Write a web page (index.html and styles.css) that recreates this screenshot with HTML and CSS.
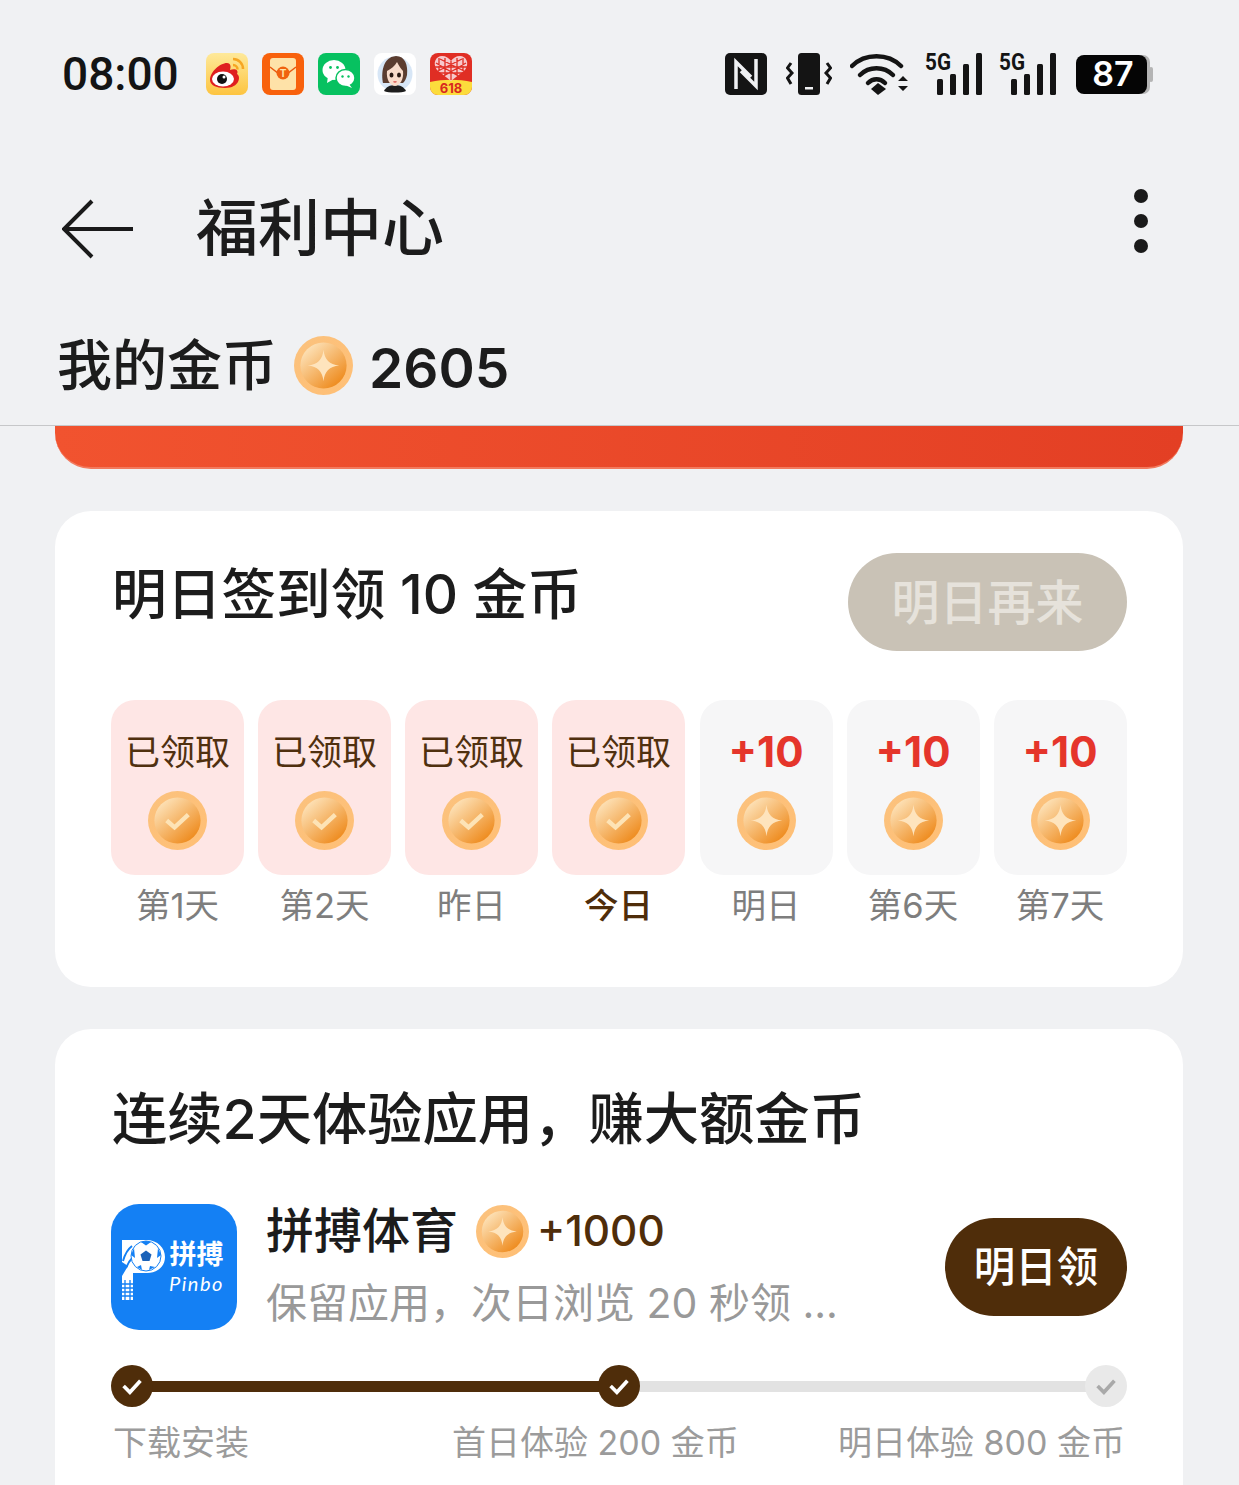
FILE: index.html
```html
<!DOCTYPE html>
<html lang="zh-CN">
<head>
  <meta charset="UTF-8" />
  <meta name="viewport" content="width=device-width, initial-scale=1" />
  <title>福利中心</title>
  <link rel="stylesheet" href="styles.css">
</head>
<body>
  <!-- shared coin art -->
  <svg class="defs" width="0" height="0">
    <defs>
      <linearGradient id="coin-rim" x1="0" y1="0" x2="1" y2="1">
        <stop offset="0" stop-color="#fbc27e" />
        <stop offset="1" stop-color="#ffbf75" />
      </linearGradient>
      <linearGradient id="coin-face" x1="0.15" y1="0.1" x2="0.85" y2="0.9">
        <stop offset="0" stop-color="#fde2b8" />
        <stop offset="1" stop-color="#ee8a1c" />
      </linearGradient>
      <symbol id="coin-star" viewBox="0 0 60 60">
        <circle cx="30" cy="30" r="30" fill="url(#coin-rim)" />
        <circle cx="30" cy="30" r="23.500" fill="url(#coin-face)" />
        <path d="M30 14 C31 24 36 29 46 30 C36 31 31 36 30 46 C29 36 24 31 14 30 C24 29 29 24 30 14Z" fill="#fee4bd" />
      </symbol>
      <symbol id="coin-check" viewBox="0 0 60 60">
        <circle cx="30" cy="30" r="30" fill="url(#coin-rim)" />
        <circle cx="30" cy="30" r="23.500" fill="url(#coin-face)" />
        <path d="M19 30 L27 37 L41 24" fill="none" stroke="#fde3b6" stroke-width="4.500" />
      </symbol>
      <symbol id="signal" viewBox="0 0 57 44">
        <text class="five-g" x="0" y="18" textLength="26" lengthAdjust="spacingAndGlyphs">5G</text>
        <rect x="12" y="27" width="6" height="16" rx="1.500" />
        <rect x="25" y="22" width="6" height="21" rx="1.500" />
        <rect x="38" y="12" width="6" height="31" rx="1.500" />
        <rect x="51" y="1" width="6" height="42" rx="1.500" />
      </symbol>
    </defs>
  </svg>

  <header class="top">
    <div class="status-bar">
      <div class="status-left">
        <span class="clock">08:00</span>
        <div class="notify-icons">
          <svg class="app-icon" viewBox="0 0 42 42">
            <defs><linearGradient id="wb" x1="0" y1="0" x2="0" y2="1"><stop offset="0" stop-color="#fee99a" /><stop offset="1" stop-color="#fdc440" /></linearGradient></defs>
            <rect width="42" height="42" rx="8" fill="url(#wb)" />
            <path d="M27 6 a10 10 0 0 1 10 10" fill="none" stroke="#f6a623" stroke-width="2.500" />
            <path d="M27 12 a4.500 4.500 0 0 1 4.500 4.500" fill="none" stroke="#f6a623" stroke-width="2.500" />
            <path d="M4 27 C4 19 14 10 21 10 C25 10 25 14 24 17 C29 15 33 17 31 21 C35 23 34 35 19 35 C10 35 4 32 4 27Z" fill="#df1f1f" />
            <ellipse cx="17" cy="26" rx="11" ry="7.500" fill="#fff" />
            <circle cx="16" cy="26" r="5" fill="#111" />
            <circle cx="18" cy="24" r="1.500" fill="#fff" />
          </svg>
          <svg class="app-icon" viewBox="0 0 42 42">
            <rect width="42" height="42" rx="8" fill="#f8610c" />
            <rect x="8" y="5" width="26" height="32" rx="3" fill="#fee2a8" />
            <path d="M8 14 L21 24 L34 14" fill="none" stroke="#e8590f" stroke-width="1.500" />
            <circle cx="21" cy="20" r="6.500" fill="#f0620f" />
            <text class="packet-t" x="21" y="23.500">T</text>
          </svg>
          <svg class="app-icon" viewBox="0 0 42 42">
            <rect width="42" height="42" rx="8" fill="#07c160" />
            <ellipse cx="16" cy="17" rx="11.500" ry="10" fill="#fff" />
            <path d="M10 23 L9 30 L16 26Z" fill="#fff" />
            <ellipse cx="27.500" cy="25" rx="9.500" ry="8.500" fill="#fff" stroke="#07c160" stroke-width="1.500" />
            <path d="M31 31 L34 35 L27 32Z" fill="#fff" />
            <circle cx="12.500" cy="14.500" r="1.400" fill="#07c160" />
            <circle cx="19.500" cy="14.500" r="1.400" fill="#07c160" />
            <circle cx="24.500" cy="23.500" r="1.200" fill="#07c160" />
            <circle cx="30.500" cy="23.500" r="1.200" fill="#07c160" />
          </svg>
          <svg class="app-icon" viewBox="0 0 42 42">
            <rect width="42" height="42" rx="8" fill="#fff" />
            <circle cx="21" cy="21" r="17.500" fill="#d7e6f6" />
            <path d="M10 38 C12 34 16 32 21 32 C26 32 30 34 32 38 C28 40 14 40 10 38Z" fill="#1d1d1d" />
            <path d="M9 30 C7 22 8 4 22 3 C31 3 34 12 33 22 C32 26 31 28 29 30Z" fill="#5b3d30" />
            <path d="M13 18 C17 16 21 13 23 9 C25 13 27 16 29 18 C30 26 26 33 21 33 C16 33 12 26 13 18Z" fill="#f9dccb" />
            <ellipse cx="17.500" cy="22" rx="2" ry="2.500" fill="#2a1a14" />
            <ellipse cx="25" cy="22" rx="2" ry="2.500" fill="#2a1a14" />
            <path d="M19.500 28.500 q1.500 1 3 0" fill="none" stroke="#d8534f" stroke-width="1.400" />
          </svg>
          <svg class="app-icon" viewBox="0 0 42 42">
            <rect width="42" height="42" rx="8" fill="#e02e24" />
            <path d="M0 29 C14 26 28 26 42 29 V34 a8 8 0 0 1 -8 8 H8 a8 8 0 0 1 -8 -8Z" fill="#fcdc3c" />
            <path d="M21 28 L7 17 C2 10 6 3 12 3 C16 3 19 5 21 8 C23 5 26 3 30 3 C36 3 40 10 35 17Z" fill="#f7c9cc" />
            <path d="M21 8 V27 M15 5 V23 M27 5 V23 M9 5 V17 M33 5 V17 M6 10 L30 24 M36 10 L12 24 M5 14 H37 M8 20 H34 M10 6 L34 18 M32 6 L8 18" stroke="#e02e24" stroke-width="1.300" fill="none" />
            <text class="pdd-text" x="21" y="40">618</text>
          </svg>
        </div>
      </div>
      <div class="status-right">
        <svg class="nfc" viewBox="0 0 42 42">
          <rect width="42" height="42" rx="5" fill="#141414" />
          <path d="M11 36 V9 L26 24 M31 6 V33 L16 18" fill="none" stroke="#f0f1f3" stroke-width="3.500" />
        </svg>
        <svg class="vibrate" viewBox="0 0 46 42">
          <rect x="12" y="0" width="22" height="42" rx="3.500" fill="#141414" />
          <rect x="19" y="34" width="8" height="2.500" fill="#f0f1f3" />
          <path d="M5 10 L1.500 15 L6 20 L1.500 25 L5 31 M41 10 L44.500 15 L40 20 L44.500 25 L41 31" fill="none" stroke="#141414" stroke-width="3" />
        </svg>
        <svg class="wifi" viewBox="0 0 58 42">
          <path d="M2 13 C15 0 38 0 51 13" fill="none" stroke="#141414" stroke-width="4.500" stroke-linecap="round" />
          <path d="M10 22 C19 13 34 13 43 22" fill="none" stroke="#141414" stroke-width="4.500" stroke-linecap="round" />
          <path d="M18 30 C23 25 30 25 35 30" fill="none" stroke="#141414" stroke-width="4.500" stroke-linecap="round" />
          <path d="M21 36 L28 30 L36 36 L28 42Z" fill="#141414" />
          <path d="M48 28 L53 23 L58 28Z M48 33 H58 L53 38Z" fill="#141414" />
        </svg>
        <svg class="signal-icon"><use href="#signal" /></svg>
        <svg class="signal-icon"><use href="#signal" /></svg>
        <svg class="battery" viewBox="0 0 77 42">
          <rect x="60" y="2" width="14" height="39" rx="7" fill="#b4b4b4" />
          <rect x="73" y="14" width="4" height="15" rx="2" fill="#b4b4b4" />
          <rect x="0" y="2" width="71" height="39" rx="8" fill="#050505" />
          <text class="battery-text" x="37" y="33">87</text>
        </svg>
      </div>
    </div>

    <div class="app-bar">
      <div class="app-bar-left">
        <svg class="back" viewBox="0 0 72 60">
          <path d="M30 2 L2 30 L30 58 M2 30 H71" fill="none" stroke="#1a1a1a" stroke-width="4" />
        </svg>
        <h1>福利中心</h1>
      </div>
      <div class="more"><i></i><i></i><i></i></div>
    </div>

    <div class="balance">
      <span class="balance-label">我的金币</span>
      <svg class="coin"><use href="#coin-star" /></svg>
      <span class="balance-num">2605</span>
    </div>
  </header>

  <main class="content">
    <div class="banner-end"></div>

    <section class="card checkin">
      <div class="checkin-head">
        <h2>明日签到领 10 金币</h2>
        <span class="btn-later">明日再来</span>
      </div>
      <div class="days">
        <div class="day">
          <div class="tile done"><span class="tile-text">已领取</span><svg class="coin"><use href="#coin-check" /></svg></div>
          <span class="day-name">第1天</span>
        </div>
        <div class="day">
          <div class="tile done"><span class="tile-text">已领取</span><svg class="coin"><use href="#coin-check" /></svg></div>
          <span class="day-name">第2天</span>
        </div>
        <div class="day">
          <div class="tile done"><span class="tile-text">已领取</span><svg class="coin"><use href="#coin-check" /></svg></div>
          <span class="day-name">昨日</span>
        </div>
        <div class="day">
          <div class="tile done"><span class="tile-text">已领取</span><svg class="coin"><use href="#coin-check" /></svg></div>
          <span class="day-name today">今日</span>
        </div>
        <div class="day">
          <div class="tile"><span class="tile-plus">+10</span><svg class="coin"><use href="#coin-star" /></svg></div>
          <span class="day-name">明日</span>
        </div>
        <div class="day">
          <div class="tile"><span class="tile-plus">+10</span><svg class="coin"><use href="#coin-star" /></svg></div>
          <span class="day-name">第6天</span>
        </div>
        <div class="day">
          <div class="tile"><span class="tile-plus">+10</span><svg class="coin"><use href="#coin-star" /></svg></div>
          <span class="day-name">第7天</span>
        </div>
      </div>
    </section>

    <section class="card trial">
      <h2>连续2天体验应用，赚大额金币</h2>
      <div class="app-row">
        <div class="pinbo">
          <svg class="pinbo-p" viewBox="0 0 44 62">
            <path d="M0 2 H24 C36 2 43 10 43 19 C43 29 35 35 25 35 H11 V62 H0 V38 L6 28 L0 24Z" fill="#fff" />
            <path d="M1 23 C3 16 6 11 10 8 M4 30 C6 25 8 22 11 19" fill="none" stroke="#1480f4" stroke-width="2" />
            <circle cx="24" cy="18" r="15" fill="#fff" stroke="#1480f4" stroke-width="1" />
            <path d="M24 12.500 L29.500 16.500 L27.500 23 H20.500 L18.500 16.500Z" fill="#1b62b8" />
            <path d="M19 4 L24 3 L29 4 L24 7.500Z M36 10 L39 17 L35 20Z M33 29 L27 32 L28 28Z M15 29 L20 32 L19 27Z M12 10 L9 17 L13 20Z" fill="#1480f4" />
            <path d="M0 46 H11 M0 50 H11 M0 54 H11 M0 58 H11 M3 42 V62 M8 42 V62" stroke="#1480f4" stroke-width="1.300" />
          </svg>
          <div class="pinbo-words">
            <span class="pinbo-cn">拼搏</span>
            <span class="pinbo-en">Pinbo</span>
          </div>
        </div>
        <div class="app-info">
          <div class="app-name-row">
            <span class="app-name">拼搏体育</span>
            <svg class="coin-small"><use href="#coin-star" /></svg>
            <span class="app-reward">+1000</span>
          </div>
          <p class="app-desc">保留应用，次日浏览 20 秒领 ...</p>
        </div>
        <span class="btn-tomorrow">明日领</span>
      </div>

      <div class="steps">
        <span class="node on"><svg viewBox="0 0 40 40"><path d="M12 20 L18 26 L28 15" /></svg></span>
        <span class="bar on"></span>
        <span class="node on"><svg viewBox="0 0 40 40"><path d="M12 20 L18 26 L28 15" /></svg></span>
        <span class="bar"></span>
        <span class="node"><svg viewBox="0 0 40 40"><path d="M12 20 L18 26 L28 15" /></svg></span>
      </div>
      <div class="step-labels">
        <span>下载安装</span>
        <span>首日体验 200 金币</span>
        <span>明日体验 800 金币</span>
      </div>
    </section>
  </main>
</body>
</html>
```

FILE: styles.css
```css
*, *::before, *::after {
  box-sizing: border-box; margin: 0; padding: 0;
}
body {
  font-family: Inter, "Noto Sans CJK SC", sans-serif;
  background: #f0f1f3;
  color: #1c1c1c;
  width: 1239px;
  height: 1485px;
  overflow: hidden;
}
.defs { position: absolute; }

/* status bar */
.status-bar {
  height: 147px;
  padding: 0 86px 0 62px;
  display: flex;
  align-items: center;
  justify-content: space-between;
}
.status-left, .status-right, .notify-icons {
  display: flex;
  align-items: center;
}
.clock {
  font-family: Roboto, sans-serif;
  font-size: 46px;
  font-weight: 500;
  color: #141414;
  width: 144px;
}
.notify-icons { gap: 14px; }
.app-icon { width: 42px; height: 42px; display: block; }
.status-right svg { display: block; flex: none; }
.nfc { width: 42px; height: 42px; margin-right: 19px; }
.vibrate { width: 46px; height: 42px; margin-right: 18px; }
.wifi { width: 58px; height: 42px; margin-right: 17px; }
.signal-icon { width: 57px; height: 44px; margin-right: 17px; fill: #141414; }
.signal-icon + .signal-icon { margin-right: 20px; }
.battery { width: 77px; height: 42px; }
.five-g { font: 700 24px Roboto, sans-serif; }
.battery-text { font: 600 34px Inter, sans-serif; fill: #fff; text-anchor: middle; }
.packet-t { font: 700 10px Inter, sans-serif; fill: #fee2a8; text-anchor: middle; }
.pdd-text { font: 700 13px Inter, sans-serif; fill: #d8281f; text-anchor: middle; }

/* title bar */
.app-bar {
  height: 162px;
  padding: 2px 91px 0 62px;
  display: flex;
  align-items: center;
  justify-content: space-between;
}
.app-bar-left { display: flex; align-items: center; gap: 62px; }
.back { width: 72px; height: 60px; display: block; }
h1 {
  font-size: 62px;
  font-weight: 500;
  line-height: 1;
}
.more {
  display: flex;
  flex-direction: column;
  gap: 11px;
  margin-bottom: 16px;
}
.more i {
  display: block;
  width: 14px;
  height: 14px;
  border-radius: 50%;
  background: #1a1a1a;
}

.balance {
  height: 117px;
  padding: 0 0 4px 57px;
  display: flex;
  align-items: center;
  border-bottom: 1px solid #c6c7c9;
}
.balance-label { font-size: 55px; font-weight: 500; line-height: 1; }
.balance .coin { margin: 0 16px 0 17px; }
.balance-num { font-size: 55px; font-weight: 600; line-height: 1; margin-top: 6px; }

.coin { width: 59px; height: 59px; display: block; flex: none; }
.coin-small { width: 53px; height: 53px; display: block; flex: none; }

/* main column */
.content { padding: 0 56px 0 55px; }
.banner-end {
  height: 43px;
  background: linear-gradient(90deg, #f1532f, #e33f24);
  border-bottom: 2px solid #f27a5e;
  border-radius: 0 0 36px 36px;
}
.card {
  background: #fff;
  border-radius: 36px;
  padding: 42px 56px 0;
  margin-top: 42px;
}
h2 {
  font-size: 55px;
  font-weight: 500;
  line-height: 1;
}

/* sign in */
.checkin { height: 476px; }
.checkin-head {
  display: flex;
  justify-content: space-between;
}
.checkin-head h2 { font-size: 54.700px; margin: 14px 0 0 1px; }
.btn-later {
  width: 279px;
  height: 98px;
  padding-bottom: 7px;
  border-radius: 49px;
  background: #c9c2b6;
  color: #e6e2db;
  font-size: 48px;
  font-weight: 500;
  display: flex;
  align-items: center;
  justify-content: center;
}
.days {
  display: grid;
  grid-template-columns: repeat(7, 133px);
  column-gap: 14px;
  margin-top: 49px;
}
.day {
  display: flex;
  flex-direction: column;
  align-items: center;
}
.day:nth-child(n+5) { margin-left: 1px; }
.tile {
  width: 133px;
  height: 175px;
  border-radius: 24px;
  background: #f6f6f7;
  display: flex;
  flex-direction: column;
  align-items: center;
  padding-top: 30px;
}
.tile.done { background: #fee6e5; }
.tile-text, .tile-plus {
  height: 44px;
  line-height: 44px;
  margin-bottom: 17px;
  white-space: nowrap;
}
.tile-text { font-size: 35px; color: #50300f; }
.tile-plus { font-size: 42px; font-weight: 700; color: #e5352b; }
.day-name {
  font-size: 34.500px;
  line-height: 1;
  margin-top: 14px;
  color: #7e7e7e;
}
.day-name.today { color: #4f2d0a; font-weight: 500; }

/* trial */
.trial { height: 500px; padding-top: 62px; }
.trial h2 { font-size: 55.300px; margin-left: 1px; white-space: nowrap; }
.app-row {
  display: flex;
  align-items: flex-start;
  margin-top: 58px;
}
.pinbo {
  width: 126px;
  height: 126px;
  border-radius: 28px;
  background: #1480f4;
  flex: none;
  display: flex;
  align-items: center;
  padding-left: 11px;
  color: #fff;
}
.pinbo-p { width: 44px; height: 62px; flex: none; margin-top: 4px; }
.pinbo-words {
  display: flex;
  flex-direction: column;
  align-items: center;
  margin-left: 3px;
}
.pinbo-cn { font-size: 27px; font-weight: 700; line-height: 32px; white-space: nowrap; }
.pinbo-en { font: italic 20px Lato, sans-serif; letter-spacing: 1.500px; }
.app-info { margin-left: 29px; width: 648px; flex: none; }
.app-name-row {
  display: flex;
  align-items: center;
  height: 54px;
}
.app-name { font-size: 48px; font-weight: 500; line-height: 1; }
.coin-small { margin: 0 8px 0 18px; }
.app-reward { font-size: 42.300px; font-weight: 500; color: #4f2d0a; line-height: 1; }
.app-desc {
  font-size: 41px;
  line-height: 1;
  color: #999;
  margin-top: 25px;
  white-space: nowrap;
}
.btn-tomorrow {
  width: 182px;
  height: 98px;
  margin-top: 14px;
  margin-left: auto;
  padding-bottom: 7px;
  border-radius: 49px;
  background: #4f2d0a;
  color: #fff;
  font-size: 41.500px;
  font-weight: 500;
  display: flex;
  align-items: center;
  justify-content: center;
  flex: none;
}
.steps {
  display: flex;
  align-items: center;
  margin-top: 35px;
}
.node {
  width: 42px;
  height: 42px;
  border-radius: 50%;
  background: #e9e9e9;
  flex: none;
  position: relative;
  z-index: 1;
}
.node.on { background: #4f2d0a; }
.node svg { width: 100%; height: 100%; display: block; }
.node path { fill: none; stroke: #a9a9a9; stroke-width: 3.500; }
.node.on path { stroke: #fff; }
.bar { height: 11px; flex: 1; background: #e2e2e2; margin: 0 -2px; }
.bar.on { background: #4f2d0a; }
.step-labels {
  display: grid;
  grid-template-columns: 339px 386px auto;
  margin-top: 9px;
  padding-left: 2px;
  font-size: 34px;
  color: #9b9b9b;
  white-space: nowrap;
}
```
